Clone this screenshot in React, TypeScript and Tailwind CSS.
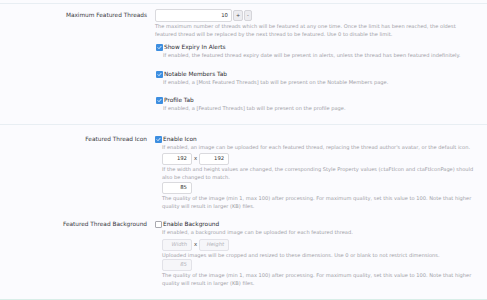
import { ReactNode } from 'react';

const font = { fontFamily: '"DejaVu Sans", Verdana, sans-serif' };

const Check = ({ checked }: { checked: boolean }) =>
  checked ? (
    <span className="mr-[1px] flex h-[7px] w-[7px] shrink-0 items-center justify-center rounded-[1px] bg-[#3d8ee0]">
      <svg viewBox="0 0 8 8" className="h-[5px] w-[5px]" aria-hidden>
        <path d="M1.5 4.2l1.7 1.7L6.6 2" fill="none" stroke="#fff" strokeWidth="1.3" strokeLinecap="round" />
      </svg>
    </span>
  ) : (
    <span className="mr-[1px] h-[7px] w-[7px] shrink-0 rounded-[1px] border border-[#a9a9b0] bg-white" />
  );

const Desc = ({ children, className = '' }: { children: ReactNode; className?: string }) => (
  <p className={`text-[5.1px] leading-[7.5px] text-[#a0a0a6] ${className}`}>{children}</p>
);

const Field = ({ value, placeholder, disabled }: { value?: string; placeholder?: string; disabled?: boolean }) => (
  <div
    className={`flex h-[12px] w-[30px] items-center justify-end rounded-[2px] border px-[4px] text-[5.3px] ${
      disabled ? 'border-[#e2e2e8] bg-[#f6f6f9] italic text-[#b5b5bb]' : 'border-[#dadade] bg-white text-[#333]'
    }`}
  >
    {value ?? placeholder}
  </div>
);

const CheckItem = ({ title, checked = true, children }: { title: string; checked?: boolean; children?: ReactNode }) => (
  <div>
    <div className="flex h-[9px] items-center">
      <Check checked={checked} />
      <span className="text-[5.8px] text-[#2b2b30]">{title}</span>
    </div>
    <div className="pl-[7px]">{children}</div>
  </div>
);

const Row = ({ label, labelTop, children }: { label: string; labelTop: string; children: ReactNode }) => (
  <div className="flex">
    <div className={`w-[147px] shrink-0 text-right text-[5.8px] leading-[9px] text-[#3a3a3f] ${labelTop}`}>{label}</div>
    <div className="ml-[8px] w-[321px]">{children}</div>
  </div>
);

const App = () => (
  <div className="h-[300px] w-[487px] overflow-hidden bg-[#fbfbfe]" style={font}>
    <div className="h-[3px]" />
    <div className="border-t border-[#e8eef3]" />

    <div className="pt-[5px]">
      <Row label="Maximum Featured Threads" labelTop="mt-[2px]">
        <div className="flex items-center">
          <div className="flex h-[13px] w-[77px] items-center justify-end rounded-[2px] border border-[#dadade] bg-white px-[3px] text-[5.3px] text-[#333]">
            10
          </div>
          <button type="button" className="ml-[1px] flex h-[11px] w-[10px] items-center justify-center rounded-[2px] border border-[#d5d5da] bg-[#ececf0] text-[5px] leading-none text-[#444]">
            +
          </button>
          <button type="button" className="ml-[1px] flex h-[11px] w-[8px] items-center justify-center rounded-[2px] border border-[#d5d5da] bg-[#ececf0] text-[5px] leading-none text-[#444]">
            -
          </button>
        </div>
        <Desc className="mt-[1px] w-[312px]">
          The maximum number of threads which will be featured at any one time. Once the limit has been reached, the oldest featured thread will be replaced by the next thread to be featured. Use 0 to disable the limit.
        </Desc>
        <div className="mt-[5px] flex flex-col gap-[10px] pl-[1px]">
          <CheckItem title="Show Expiry In Alerts">
            <Desc>If enabled, the featured thread expiry date will be present in alerts, unless the thread has been featured indefinitely.</Desc>
          </CheckItem>
          <CheckItem title="Notable Members Tab">
            <Desc>If enabled, a [Most Featured Threads] tab will be present on the Notable Members page.</Desc>
          </CheckItem>
          <CheckItem title="Profile Tab">
            <Desc>If enabled, a [Featured Threads] tab will be present on the profile page.</Desc>
          </CheckItem>
        </div>
      </Row>
    </div>

    <div className="mt-[11px] border-t border-[#e8eef3]" />

    <div className="pt-[10px]">
      <Row label="Featured Thread Icon" labelTop="">
        <CheckItem title="Enable Icon">
          <Desc>If enabled, an image can be uploaded for each featured thread, replacing the thread author's avatar, or the default icon.</Desc>
          <div className="mt-[2px] flex items-center">
            <Field value="192" />
            <span className="mx-[2px] text-[5.3px] text-[#333]">x</span>
            <Field value="192" />
          </div>
          <Desc className="mt-[1px]">
            If the width and height values are changed, the corresponding Style Property values (ctaFtIcon and ctaFtIconPage) should also be changed to match.
          </Desc>
          <div className="mt-[1px]">
            <Field value="85" />
          </div>
          <Desc className="mt-[1px]">
            The quality of the image (min 1, max 100) after processing. For maximum quality, set this value to 100. Note that higher quality will result in larger (KB) files.
          </Desc>
        </CheckItem>
      </Row>
    </div>

    <div className="pt-[10px]">
      <Row label="Featured Thread Background" labelTop="">
        <CheckItem title="Enable Background" checked={false}>
          <Desc>If enabled, a background image can be uploaded for each featured thread.</Desc>
          <div className="mt-[2px] flex items-center">
            <Field placeholder="Width" disabled />
            <span className="mx-[2px] text-[5.3px] text-[#333]">x</span>
            <Field placeholder="Height" disabled />
          </div>
          <Desc className="mt-[1px]">Uploaded images will be cropped and resized to these dimensions. Use 0 or blank to not restrict dimensions.</Desc>
          <div>
            <Field value="85" disabled />
          </div>
          <Desc className="mt-[1px]">
            The quality of the image (min 1, max 100) after processing. For maximum quality, set this value to 100. Note that higher quality will result in larger (KB) files.
          </Desc>
        </CheckItem>
      </Row>
    </div>

    <div className="mt-[12px] border-t border-[#d8eee8]" />
  </div>
);

export default App;
